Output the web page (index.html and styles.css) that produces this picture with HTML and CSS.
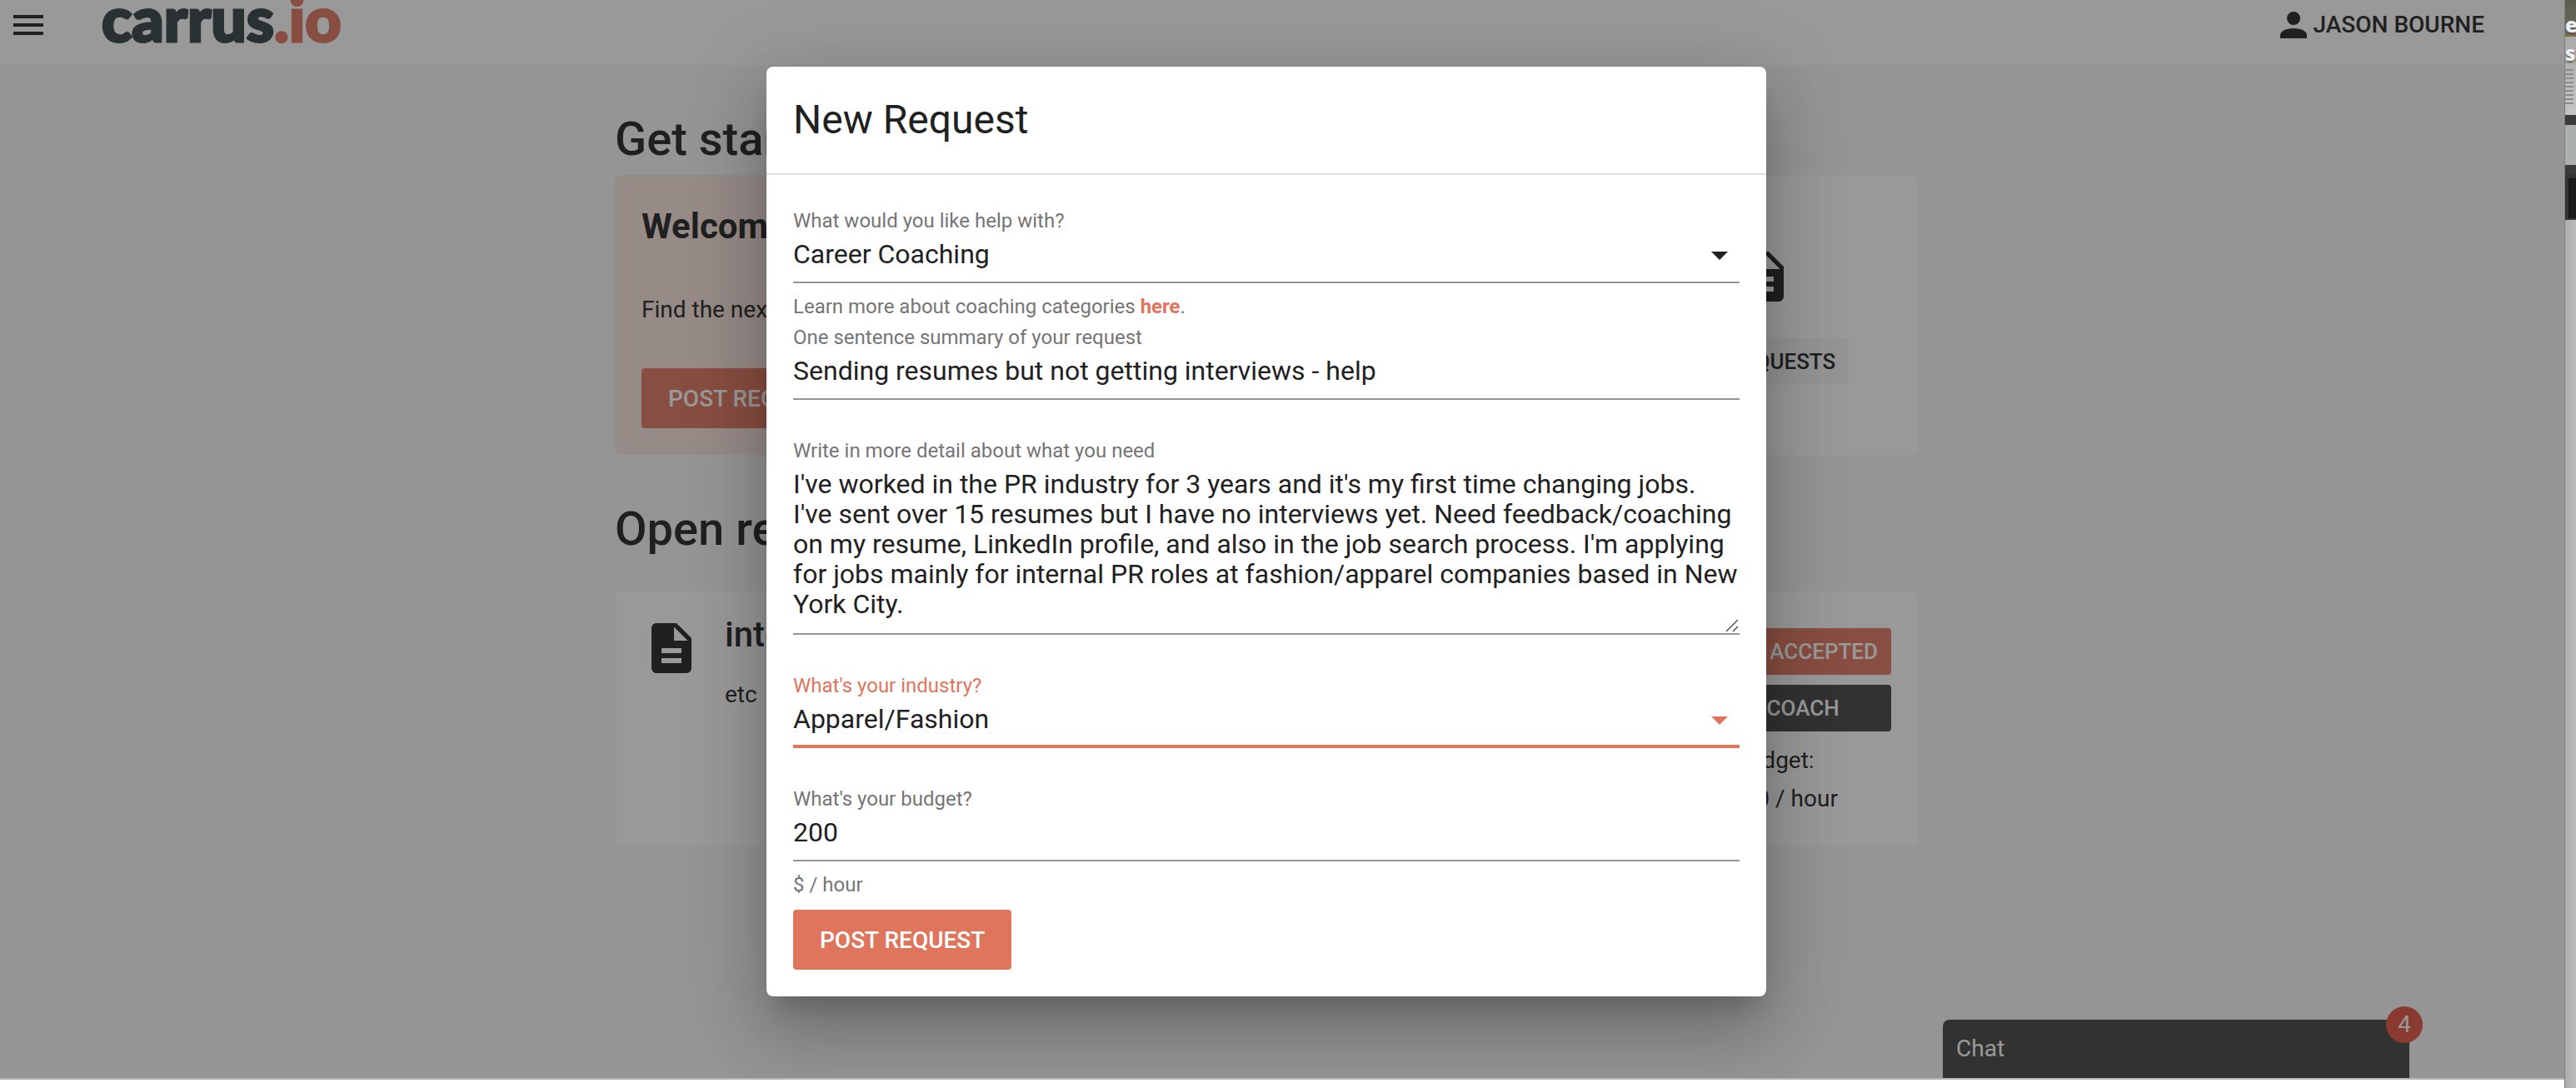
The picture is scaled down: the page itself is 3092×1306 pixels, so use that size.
FILE: index.html
```html
<!DOCTYPE html>
<html lang="en">
<head>
<meta charset="utf-8">
<title>carrus.io – New Request</title>
<link rel="stylesheet" href="styles.css">
</head>
<body>
<svg class="sprite" aria-hidden="true">
  <symbol id="doc" viewBox="0 0 24 24"><path d="M13,9H18.5L13,3.5V9M6,2H14L20,8V20A2,2 0 0,1 18,22H6C4.89,22 4,21.1 4,20V4C4,2.89 4.89,2 6,2M16,18V16H8V18H16M16,14V12H8V14H16Z"/></symbol>
  <symbol id="caret" viewBox="0 0 24 24"><path d="M7 10l5 5 5-5z"/></symbol>
  <symbol id="person" viewBox="0 0 24 24"><path d="M12 4a4 4 0 0 1 4 4 4 4 0 0 1-4 4 4 4 0 0 1-4-4 4 4 0 0 1 4-4m0 10c4.42 0 8 1.79 8 4v2H4v-2c0-2.21 3.58-4 8-4z"/></symbol>
</svg>
<div class="desktop">
  <div class="app">
    <header class="topbar">
      <button class="menu" type="button" aria-label="Menu"><svg viewBox="3 6 18 12"><path d="M3 6h18v2H3V6m0 5h18v2H3v-2m0 5h18v2H3v-2z"/></svg></button>
      <a class="logo" href="#">carrus<span class="logo-tld">.io</span></a>
      <button class="account" type="button"><svg class="icon"><use href="#person"/></svg>JASON BOURNE</button>
    </header>
    <main class="page">
      <h2 class="heading">Get started</h2>
      <section class="intro">
        <article class="card welcome">
          <h3 class="card-title">Welcome, Jason</h3>
          <p class="copy">Find the next step in your career</p>
          <button class="btn btn-primary" type="button">POST REQUEST</button>
        </article>
        <article class="card shortcut">
          <svg class="icon-large"><use href="#doc"/></svg>
          <button class="btn btn-small btn-light" type="button">MY REQUESTS</button>
        </article>
      </section>
      <h2 class="heading heading-open">Open requests</h2>
      <article class="card request">
        <svg class="icon-large"><use href="#doc"/></svg>
        <div class="request-text">
          <h3 class="request-title">interview</h3>
          <p class="copy">etc</p>
        </div>
        <div class="request-side">
          <button class="btn btn-small btn-primary" type="button">REQUEST ACCEPTED</button>
          <button class="btn btn-small btn-dark" type="button">VIEW COACH</button>
          <p class="budget">Budget:<br>$ 100 / hour</p>
        </div>
      </article>
    </main>
    <button class="chat" type="button">Chat<span class="badge">4</span></button>
    <div class="overlay">
      <form class="dialog" role="dialog" aria-labelledby="dialog-title">
        <h1 class="dialog-title" id="dialog-title">New Request</h1>
        <div class="fields">
          <div class="field">
            <label for="topic">What would you like help with?</label>
            <div class="control"><select id="topic"><option>Career Coaching</option></select><svg class="icon caret"><use href="#caret"/></svg></div>
            <p class="hint">Learn more about coaching categories <a href="#">here</a>.</p>
          </div>
          <div class="field field-tight">
            <label for="summary">One sentence summary of your request</label>
            <input id="summary" type="text" value="Sending resumes but not getting interviews - help">
          </div>
          <div class="field">
            <label for="detail">Write in more detail about what you need</label>
            <div class="control"><textarea id="detail" rows="5" spellcheck="false">I've worked in the PR industry for 3 years and it's my first time changing jobs. I've sent over 15 resumes but I have no interviews yet. Need feedback/coaching on my resume, LinkedIn profile, and also in the job search process. I'm applying for jobs mainly for internal PR roles at fashion/apparel companies based in New York City.</textarea><svg class="grip" viewBox="0 0 16 16"><path d="M1 15L15 1M9 15L15 9"/></svg></div>
          </div>
          <div class="field field-active">
            <label for="industry">What's your industry?</label>
            <div class="control"><select id="industry"><option>Apparel/Fashion</option></select><svg class="icon caret"><use href="#caret"/></svg></div>
          </div>
          <div class="field">
            <label for="budget">What's your budget?</label>
            <input id="budget" type="text" value="200">
            <p class="hint">$ / hour</p>
          </div>
          <button class="btn btn-primary submit" type="button">POST REQUEST</button>
        </div>
      </form>
    </div>
  </div>
  <aside class="behind">
    <div class="behind-photo"><b>es</b></div>
    <div class="behind-doc"><b>s.</b><div class="behind-lines"></div></div>
    <div class="behind-bar"></div>
    <div class="behind-pane"></div>
    <div class="behind-bar"></div>
    <div class="behind-screen"></div>
  </aside>
</div>
</body>
</html>
```
FILE: styles.css
```css
:root {
  --primary: #e0755d;
  --ink: #212121;
  --muted: #757575;
  --edge: 38px;
}
* { box-sizing: border-box; }
body { margin: 0; background: #fff; color: var(--ink); font: 28px/44px Roboto, sans-serif; }
h1, h2, h3, p { margin: 0; }
button, input, select, textarea { font: inherit; color: inherit; margin: 0; padding: 0; border: 0; border-radius: 0; background: none; outline: 0; }
svg { display: block; fill: currentColor; }
.sprite { position: absolute; width: 0; height: 0; }

.desktop { display: flex; height: 100vh; overflow: hidden; }
.app {
  position: relative; flex: 1; display: flex; flex-direction: column;
  margin-bottom: 10px; background: #f8f8f8; border-bottom: 2px solid #b3b3b3; overflow: hidden;
}
.icon { width: 48px; height: 48px; }
.icon-large { width: 72px; height: 72px; flex: none; }

.topbar { display: flex; align-items: center; height: 78px; padding: 0 96px 18px 16px; background: #fff; }
.menu svg { width: 36px; height: 24px; }
.logo {
  margin-left: 70px; padding-bottom: 18px; font: 900 75px/60px Lato, sans-serif;
  color: #303f43; text-decoration: none; -webkit-text-stroke: 3px currentColor;
}
.logo-tld { color: var(--primary); }
.account { display: flex; align-items: center; margin-left: auto; font-weight: 500; }

.page { width: 1564px; max-width: 100%; margin-left: calc((100% - var(--edge) - 1564px) / 2); }
.heading { padding: 57px 0 11px; font-size: 56px; line-height: 64px; font-weight: 500; }
.heading-open { padding-bottom: 43px; }
.card { background: #fff; border-radius: 8px; }
.intro { display: flex; gap: 32px; }
.welcome { flex: 1; padding: 32px; background: #fce5df; }
.card-title { font-size: 42px; line-height: 60px; font-weight: 700; }
.welcome .copy { padding: 48px 0; }
.btn { display: block; height: 72px; padding: 2px 32px 0; border-radius: 4px; font-size: 28px; font-weight: 500; white-space: nowrap; }
.btn-small { height: 56px; padding: 0 16px; font-size: 26px; }
.btn-primary { background: var(--primary); color: #fff; }
.btn-light { background: #f5f5f5; }
.btn-dark { background: #424242; color: #fff; }
.shortcut { display: flex; flex-direction: column; align-items: center; width: 370px; padding-top: 86px; gap: 38px; }
.request { display: flex; height: 306px; padding: 32px; }
.request-text { flex: 1; padding-left: 28px; }
.request-title { font-size: 42px; line-height: 40px; font-weight: 500; padding-bottom: 30px; }
.request-side { display: flex; flex-direction: column; gap: 12px; padding-top: 12px; text-align: center; }
.budget { line-height: 46px; }

.chat {
  position: absolute; right: 186px; bottom: 0; width: 560px; height: 70px; padding: 0 16px;
  background: #424242; color: #fff; text-align: left; border-radius: 8px 8px 0 0;
}
.badge {
  position: absolute; top: -16px; right: -16px; width: 44px; height: 44px;
  border-radius: 50%; background: #e4513f; text-align: center; line-height: 44px;
}

.overlay {
  position: absolute; inset: 0; display: flex; justify-content: center; align-items: flex-start;
  padding: 80px var(--edge) 0 0; background: rgba(33, 33, 33, .46);
}
.dialog {
  width: 1200px; max-width: 100%; background: #fff; border-radius: 8px;
  box-shadow: 0 22px 30px -14px rgba(0,0,0,.2), 0 48px 76px 6px rgba(0,0,0,.14), 0 18px 92px 16px rgba(0,0,0,.12);
}
.dialog-title { padding: 32px; font-size: 48px; line-height: 64px; font-weight: 400; border-bottom: 2px solid #dfdfdf; }
.fields { padding: 41px 32px 32px; }
.field { display: flex; flex-direction: column; margin-top: 47px; }
.field:first-child { margin-top: 0; }
.field-tight { margin-top: 9px; }
.field label { font-size: 24px; line-height: 28px; color: var(--muted); }
.control { position: relative; display: flex; }
.field input, .field select {
  width: 100%; height: 57px; margin-top: 4px; padding-bottom: 11px;
  font-size: 32px; line-height: 44px; appearance: none; border-bottom: 2px solid #949494;
}
.field textarea {
  width: 100%; height: 199px; margin-top: 8px; padding-bottom: 17px; overflow: hidden;
  font-size: 32px; line-height: 36px; resize: none; border-bottom: 2px solid #949494;
}
.caret { position: absolute; right: 0; top: 3px; pointer-events: none; }
.grip { position: absolute; right: 1px; bottom: 3px; width: 16px; height: 16px; fill: none; stroke: #555; stroke-width: 1.5; }
.hint { padding-top: 14px; font-size: 24px; line-height: 28px; color: var(--muted); }
.hint a { color: var(--primary); font-weight: 700; text-decoration: none; }
.field-active label, .field-active .caret { color: var(--primary); }
.field-active select { padding-bottom: 9px; border-bottom: 4px solid var(--primary); }
.submit { margin-top: 16px; }

.behind { width: 14px; overflow: hidden; border-left: 1px solid #7d7d7d; background: linear-gradient(90deg, #adadad, #bcbcbc); font: 700 24px/28px "Open Sans", sans-serif; color: #eee; }
.behind b { display: block; text-shadow: 0 2px 3px #555; }
.behind-photo { height: 44px; padding-top: 16px; background: linear-gradient(#5c5d4c, #6c6c5b); border-bottom: 2px solid #8a7030; }
.behind-doc { height: 94px; padding-top: 6px; background: linear-gradient(#aaa, #c4c4c4); }
.behind-lines { width: 10px; height: 46px; margin-top: 2px; background: repeating-linear-gradient(transparent 0 3px, #8c8c8c 3px 5px); }
.behind-bar { height: 12px; background: #37393a; }
.behind-pane { height: 48px; background: #abafae; }
.behind-screen { height: 54px; background: #17181a; border: solid #323334; border-width: 4px 0 2px 4px; }
```
